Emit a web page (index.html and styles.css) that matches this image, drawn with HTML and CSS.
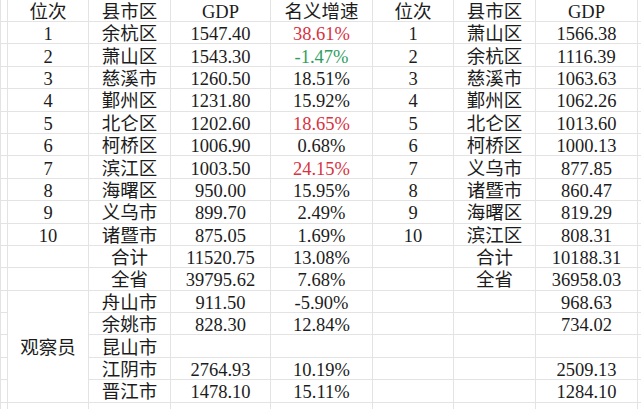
FILE: index.html
```html
<!DOCTYPE html>
<html lang="zh">
<head>
<meta charset="utf-8">
<link rel="stylesheet" href="styles.css">
</head>
<body>
<table class="sheet">
  <colgroup>
    <col class="c-edge-l">
    <col class="c-rank">
    <col class="c-name">
    <col class="c-gdp">
    <col class="c-rate">
    <col class="c-rank">
    <col class="c-name">
    <col class="c-gdp2">
    <col class="c-edge-r">
  </colgroup>
  <tbody>
    <tr class="head"><td></td><td>位次</td><td>县市区</td><td>GDP</td><td>名义增速</td><td>位次</td><td>县市区</td><td>GDP</td><td></td></tr>
    <tr><td></td><td>1</td><td>余杭区</td><td>1547.40</td><td class="up">38.61%</td><td>1</td><td>萧山区</td><td>1566.38</td><td></td></tr>
    <tr><td></td><td>2</td><td>萧山区</td><td>1543.30</td><td class="down">-1.47%</td><td>2</td><td>余杭区</td><td>1116.39</td><td></td></tr>
    <tr><td></td><td>3</td><td>慈溪市</td><td>1260.50</td><td>18.51%</td><td>3</td><td>慈溪市</td><td>1063.63</td><td></td></tr>
    <tr><td></td><td>4</td><td>鄞州区</td><td>1231.80</td><td>15.92%</td><td>4</td><td>鄞州区</td><td>1062.26</td><td></td></tr>
    <tr><td></td><td>5</td><td>北仑区</td><td>1202.60</td><td class="up">18.65%</td><td>5</td><td>北仑区</td><td>1013.60</td><td></td></tr>
    <tr><td></td><td>6</td><td>柯桥区</td><td>1006.90</td><td>0.68%</td><td>6</td><td>柯桥区</td><td>1000.13</td><td></td></tr>
    <tr><td></td><td>7</td><td>滨江区</td><td>1003.50</td><td class="up">24.15%</td><td>7</td><td>义乌市</td><td>877.85</td><td></td></tr>
    <tr><td></td><td>8</td><td>海曙区</td><td>950.00</td><td>15.95%</td><td>8</td><td>诸暨市</td><td>860.47</td><td></td></tr>
    <tr><td></td><td>9</td><td>义乌市</td><td>899.70</td><td>2.49%</td><td>9</td><td>海曙区</td><td>819.29</td><td></td></tr>
    <tr><td></td><td>10</td><td>诸暨市</td><td>875.05</td><td>1.69%</td><td>10</td><td>滨江区</td><td>808.31</td><td></td></tr>
    <tr><td></td><td></td><td>合计</td><td>11520.75</td><td>13.08%</td><td></td><td>合计</td><td>10188.31</td><td></td></tr>
    <tr><td></td><td></td><td>全省</td><td>39795.62</td><td>7.68%</td><td></td><td>全省</td><td>36958.03</td><td></td></tr>
    <tr><td></td><td rowspan="5">观察员</td><td>舟山市</td><td>911.50</td><td>-5.90%</td><td></td><td></td><td>968.63</td><td></td></tr>
    <tr><td></td><td>余姚市</td><td>828.30</td><td>12.84%</td><td></td><td></td><td>734.02</td><td></td></tr>
    <tr><td></td><td>昆山市</td><td></td><td></td><td></td><td></td><td></td><td></td></tr>
    <tr><td></td><td>江阴市</td><td>2764.93</td><td>10.19%</td><td></td><td></td><td>2509.13</td><td></td></tr>
    <tr><td></td><td>晋江市</td><td>1478.10</td><td>15.11%</td><td></td><td></td><td>1284.10</td><td></td></tr>
    <tr class="tail"><td></td><td></td><td></td><td></td><td></td><td></td><td></td><td></td><td></td></tr>
  </tbody>
</table>
</body>
</html>
```

FILE: styles.css
```css
html, body {
  margin: 0;
  padding: 0;
  background: #ffffff;
  overflow: hidden;
}

.sheet {
  border-collapse: collapse;
  table-layout: fixed;
  width: 649px;
  margin-top: -1px;
  font-family: "Liberation Serif", "Noto Sans CJK SC", serif;
  font-size: 18.5px;
  color: #1c1c1c;
}

.c-edge-l { width: 7px; }
.c-rank { width: 81px; }
.c-name { width: 82px; }
.c-gdp { width: 100px; }
.c-rate { width: 102px; }
.c-gdp2 { width: 102px; }
.c-edge-r { width: 12px; }

.sheet td {
  border: 1px solid #e3e3e3;
  padding: 3px 0 0 0;
  height: 22.4px;
  line-height: 18px;
  text-align: center;
  vertical-align: middle;
  white-space: nowrap;
  overflow: hidden;
  box-sizing: border-box;
}

.sheet .head td {
  height: 22px;
}

.sheet .up { color: #d8333f; }
.sheet .down { color: #2f9e5f; }
```
